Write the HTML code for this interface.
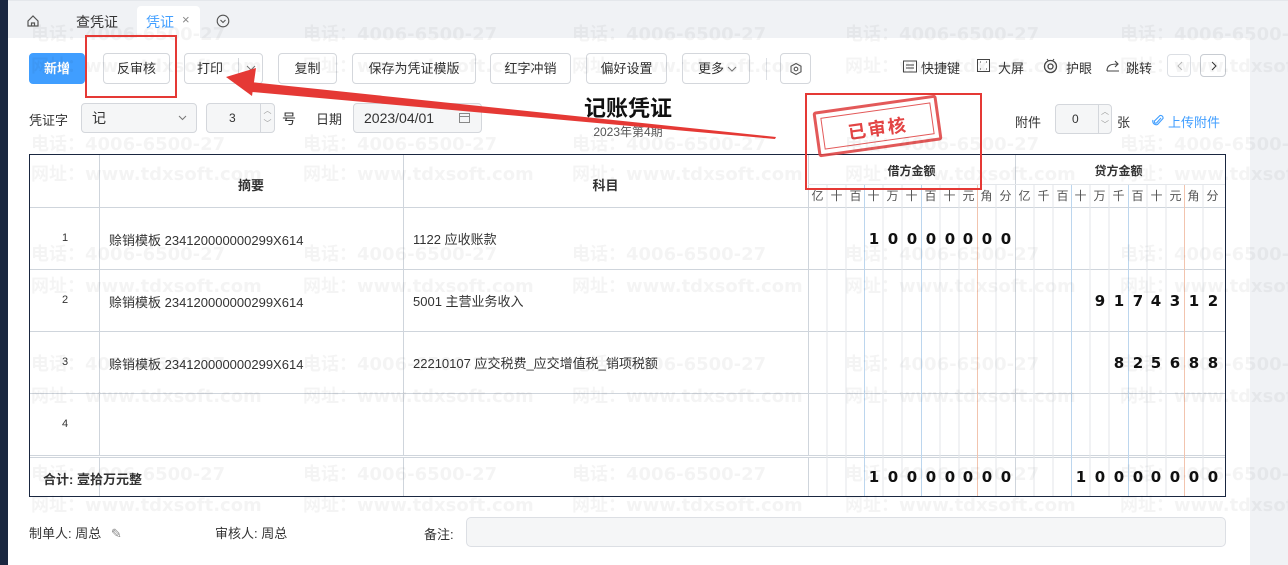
<!DOCTYPE html>
<html><head><meta charset="utf-8"><style>
*{box-sizing:border-box;margin:0;padding:0}
body{width:1288px;height:565px;overflow:hidden;background:#fff;font-family:"Liberation Sans","Noto Sans CJK SC",sans-serif;font-size:13px;color:#333;position:relative}
.a{position:absolute}
.btn{position:absolute;top:53px;height:31px;border:1px solid #d4d7dc;border-radius:4px;background:#fff;font-size:13px;line-height:29px;text-align:center;color:#333}
.inp{position:absolute;height:30px;border:1px solid #d4d7dc;border-radius:4px;background:#f5f6f7;line-height:28px;font-size:13px}
.wm{position:absolute;font-weight:bold;font-size:18px;color:rgba(0,0,0,0.045);white-space:nowrap;pointer-events:none;font-family:"DejaVu Sans","Noto Sans CJK SC",sans-serif}
.vl{position:absolute;width:1px}
.hl{position:absolute;height:1px;background:#cfd5dc}
.u{position:absolute;top:187px;width:19px;text-align:center;font-size:12px;color:#555}
</style></head><body>
<div class="a" style="left:0;top:0;width:8px;height:565px;background:#1a2740"></div>
<div class="a" style="left:8px;top:0;width:1280px;height:38px;background:#f0f2f5;border-top:1px solid #e4e7eb"></div>
<div class="a" style="left:1250px;top:38px;width:38px;height:527px;background:#f0f2f5"></div>
<svg class="a" style="left:26px;top:14px" width="14" height="14" viewBox="0 0 14 14"><path d="M2 7 L7 2 L12 7 V12 H2 Z M5.5 12 V9 H8.5 V12" fill="none" stroke="#555" stroke-width="1.2"/></svg>
<div class="a" style="left:76px;top:12px;font-size:14px;color:#333">查凭证</div>
<div class="a" style="left:137px;top:6px;width:63px;height:32px;background:#fff;border-radius:4px 4px 0 0"></div>
<div class="a" style="left:146px;top:12px;font-size:14px;color:#409eff">凭证</div>
<div class="a" style="left:182px;top:12px;font-size:13px;color:#888">×</div>
<svg class="a" style="left:216px;top:14px" width="14" height="14" viewBox="0 0 14 14"><circle cx="7" cy="7" r="5.8" fill="none" stroke="#555" stroke-width="1.1"/><path d="M4.5 6 L7 8.5 L9.5 6" fill="none" stroke="#555" stroke-width="1.1"/></svg>
<div class="btn" style="left:29px;width:56px;background:#409eff;border-color:#409eff;color:#fff;font-weight:bold">新增</div>
<div class="btn" style="left:103px;width:67px">反审核</div>
<div class="btn" style="left:184px;width:79px;text-align:left;padding-left:12px">打印<span style="position:absolute;left:53px;top:4px;height:21px;border-left:1px solid #d4d7dc"></span><svg style="position:absolute;left:61px;top:10px" width="10" height="8" viewBox="0 0 10 8"><path d="M1 2 L5 6 L9 2" fill="none" stroke="#777"/></svg></div>
<div class="btn" style="left:278px;width:59px">复制</div>
<div class="btn" style="left:352px;width:124px">保存为凭证模版</div>
<div class="btn" style="left:490px;width:81px">红字冲销</div>
<div class="btn" style="left:586px;width:81px">偏好设置</div>
<div class="btn" style="left:682px;width:68px;padding-right:10px">更多<svg style="position:absolute;left:44px;top:12px" width="10" height="7" viewBox="0 0 10 7"><path d="M1 1 L5 5 L9 1" fill="none" stroke="#777"/></svg></div>
<div class="a" style="left:766px;top:58px;width:1px;height:22px;background:#dcdfe4"></div>
<div class="btn" style="left:780px;width:31px"><svg width="14" height="14" viewBox="0 0 14 14" style="margin-top:8px"><path d="M7 1.5 L12 4.2 V9.8 L7 12.5 L2 9.8 V4.2 Z" fill="none" stroke="#555" stroke-width="1.1"/><circle cx="7" cy="7" r="1.8" fill="none" stroke="#555" stroke-width="1.1"/></svg></div>
<svg class="a" style="left:903px;top:60px" width="14" height="13" viewBox="0 0 14 13"><rect x="0.5" y="1" width="13" height="11" fill="none" stroke="#444"/><path d="M3 5h8M3 8h8" stroke="#444"/></svg>
<div class="a" style="left:921px;top:58px;font-size:13px">快捷键</div>
<svg class="a" style="left:977px;top:59px" width="13" height="13" viewBox="0 0 13 13"><rect x="0.5" y="0.5" width="12" height="12" fill="none" stroke="#444"/><path d="M3 3h1M9 3h1M3 10h1M9 10h1" stroke="#444"/></svg>
<div class="a" style="left:998px;top:58px;font-size:13px">大屏</div>
<svg class="a" style="left:1042px;top:57px" width="17" height="17" viewBox="0 0 17 17"><circle cx="8.5" cy="9.5" r="6" fill="none" stroke="#444" stroke-width="1.3"/><circle cx="8.5" cy="9.5" r="2.5" fill="none" stroke="#444" stroke-width="1.3"/><path d="M5 2l1.5 2M12 2l-1.5 2" stroke="#444"/></svg>
<div class="a" style="left:1066px;top:58px;font-size:13px">护眼</div>
<svg class="a" style="left:1106px;top:59px" width="15" height="13" viewBox="0 0 15 13"><path d="M1 12 C1 6 5 5 12 5 M9 2 L12 5 L9 8" fill="none" stroke="#444" stroke-width="1.1"/><path d="M1 12h12" stroke="#444"/></svg>
<div class="a" style="left:1126px;top:58px;font-size:13px">跳转</div>
<div class="a" style="left:1167px;top:54px;width:24px;height:23px;border:1px solid #dcdfe4;border-radius:4px"><svg style="position:absolute;left:8px;top:6px" width="7" height="10" viewBox="0 0 7 10"><path d="M6 1 L2 5 L6 9" fill="none" stroke="#bbb"/></svg></div>
<div class="a" style="left:1200px;top:54px;width:26px;height:23px;border:1px solid #c8ccd2;border-radius:4px"><svg style="position:absolute;left:10px;top:6px" width="7" height="10" viewBox="0 0 7 10"><path d="M1 1 L5 5 L1 9" fill="none" stroke="#333"/></svg></div>
<div class="a" style="left:29px;top:110px">凭证字</div>
<div class="inp" style="left:81px;top:103px;width:116px;padding-left:10px;font-size:14px">记<svg style="position:absolute;right:9px;top:11px" width="9" height="6" viewBox="0 0 9 6"><path d="M1 1 L4.5 4.5 L8 1" fill="none" stroke="#777"/></svg></div>
<div class="inp" style="left:206px;top:103px;width:69px;padding-left:22px;font-size:12px">3<span style="position:absolute;right:0;top:0;width:14px;height:28px;border-left:1px solid #d4d7dc;font-size:8px;line-height:13px;color:#999;text-align:center">︿<br>﹀</span></div>
<div class="a" style="left:282px;top:109px;font-size:14px">号</div>
<div class="a" style="left:316px;top:109px">日期</div>
<div class="inp" style="left:353px;top:103px;width:129px;padding-left:10px;font-size:14px">2023/04/01<svg style="position:absolute;right:11px;top:9px" width="11" height="10" viewBox="0 0 11 10"><rect x="0.5" y="0.5" width="10" height="9" fill="none" stroke="#888"/><path d="M0.5 3.5h10" stroke="#888"/></svg></div>
<div class="a" style="left:568px;top:91px;width:120px;text-align:center;font-size:22px;font-weight:bold;color:#111">记账凭证</div>
<div class="a" style="left:568px;top:123px;width:120px;text-align:center;font-size:12px;color:#555">2023年第4期</div>
<div class="a" style="left:1015px;top:112px">附件</div>
<div class="inp" style="left:1055px;top:104px;width:57px;padding-left:16px;font-size:12px">0<span style="position:absolute;right:0;top:0;width:13px;height:28px;border-left:1px solid #d4d7dc;font-size:8px;line-height:13px;color:#999;text-align:center">︿<br>﹀</span></div>
<div class="a" style="left:1117px;top:112px">张</div>
<svg class="a" style="left:1152px;top:113px" width="12" height="14" viewBox="0 0 12 14"><path d="M9 5 L4.5 10 A1.5 1.5 0 0 1 2.5 8 L8 2.5 A2.5 2.5 0 0 1 11 5.5 L5.5 11.5 A3.5 3.5 0 0 1 1 7" fill="none" stroke="#409eff" stroke-width="1.1"/></svg>
<div class="a" style="left:1168px;top:112px;color:#409eff">上传附件</div>
<div class="a" style="left:29px;top:154px;width:1197px;height:343px;border:1.5px solid #1a2740"></div>
<div class="vl" style="left:99px;top:155px;height:341px;background:#cfd5dc"></div>
<div class="vl" style="left:403px;top:155px;height:341px;background:#cfd5dc"></div>
<div class="vl" style="left:808px;top:155px;height:341px;background:#cfd5dc"></div>
<div class="vl" style="left:1015px;top:155px;height:341px;background:#cfd5dc"></div>
<div class="hl" style="left:808px;top:184px;width:417px;background:#e3e6ea"></div>
<div class="hl" style="left:30px;top:207px;width:1195px"></div>
<div class="hl" style="left:30px;top:269px;width:1195px"></div>
<div class="hl" style="left:30px;top:331px;width:1195px"></div>
<div class="hl" style="left:30px;top:393px;width:1195px"></div>
<div class="hl" style="left:30px;top:455px;width:1195px;height:3px;border-top:1px solid #cfd5dc;border-bottom:1px solid #cfd5dc;background:#fff"></div>
<div class="a" style="left:99px;top:175px;width:304px;text-align:center;font-weight:bold">摘要</div>
<div class="a" style="left:403px;top:175px;width:405px;text-align:center;font-weight:bold">科目</div>
<div class="a" style="left:808px;top:162px;width:207px;text-align:center;font-weight:bold;font-size:12px">借方金额</div>
<div class="a" style="left:1015px;top:162px;width:207px;text-align:center;font-weight:bold;font-size:12px">贷方金额</div>
<div class="a" style="left:30px;top:232px;width:70px;text-align:center;font-size:11px">1</div>
<div class="a" style="left:30px;top:294px;width:70px;text-align:center;font-size:11px">2</div>
<div class="a" style="left:30px;top:356px;width:70px;text-align:center;font-size:11px">3</div>
<div class="a" style="left:30px;top:418px;width:70px;text-align:center;font-size:11px">4</div>
<div class="a" style="left:109px;top:230px">赊销模板 234120000000299X614</div>
<div class="a" style="left:109px;top:292px">赊销模板 234120000000299X614</div>
<div class="a" style="left:109px;top:354px">赊销模板 234120000000299X614</div>
<div class="a" style="left:413px;top:229px">1122 应收账款</div>
<div class="a" style="left:413px;top:291px">5001 主营业务收入</div>
<div class="a" style="left:413px;top:353px">22210107 应交税费_应交增值税_销项税额</div>
<div class="a" style="left:43px;top:469px;font-weight:bold">合计: 壹拾万元整</div>
<div class="u" style="left:808px">亿</div><div class="u" style="left:827px">十</div><div class="u" style="left:846px">百</div><div class="u" style="left:864px">十</div><div class="u" style="left:883px">万</div><div class="u" style="left:902px">十</div><div class="u" style="left:921px">百</div><div class="u" style="left:940px">十</div><div class="u" style="left:959px">元</div><div class="u" style="left:977px">角</div><div class="u" style="left:996px">分</div>
<div class="u" style="left:1015px">亿</div><div class="u" style="left:1034px">千</div><div class="u" style="left:1053px">百</div><div class="u" style="left:1071px">十</div><div class="u" style="left:1090px">万</div><div class="u" style="left:1109px">千</div><div class="u" style="left:1128px">百</div><div class="u" style="left:1147px">十</div><div class="u" style="left:1166px">元</div><div class="u" style="left:1184px">角</div><div class="u" style="left:1203px">分</div>
<svg class="a" style="left:0;top:0" width="1288" height="565">
<g stroke-width="1">
<path d="M827 185V496M846 185V496M883 185V496M902 185V496M940 185V496M959 185V496M996 185V496" stroke="#e3e6ea"/>
<path d="M864.5 185V496M921.5 185V496" stroke="#bcd6ee"/>
<path d="M977.5 185V496" stroke="#f2c4ae"/>
<path d="M1034 185V496M1053 185V496M1090 185V496M1109 185V496M1147 185V496M1166 185V496M1203 185V496" stroke="#e3e6ea"/>
<path d="M1071.5 185V496M1128.5 185V496" stroke="#bcd6ee"/>
<path d="M1184.5 185V496" stroke="#f2c4ae"/>
</g>
<g font-family="DejaVu Sans,sans-serif" font-weight="bold" font-size="15" fill="#111" text-anchor="middle">
<text x="874" y="244">1</text><text x="893" y="244">0</text><text x="912" y="244">0</text><text x="931" y="244">0</text><text x="950" y="244">0</text><text x="968" y="244">0</text><text x="987" y="244">0</text><text x="1006" y="244">0</text>
<text x="1100" y="306">9</text><text x="1119" y="306">1</text><text x="1138" y="306">7</text><text x="1156" y="306">4</text><text x="1175" y="306">3</text><text x="1194" y="306">1</text><text x="1213" y="306">2</text>
<text x="1119" y="368">8</text><text x="1138" y="368">2</text><text x="1156" y="368">5</text><text x="1175" y="368">6</text><text x="1194" y="368">8</text><text x="1213" y="368">8</text>
<text x="874" y="482">1</text><text x="893" y="482">0</text><text x="912" y="482">0</text><text x="931" y="482">0</text><text x="950" y="482">0</text><text x="968" y="482">0</text><text x="987" y="482">0</text><text x="1006" y="482">0</text>
<text x="1081" y="482">1</text><text x="1100" y="482">0</text><text x="1119" y="482">0</text><text x="1138" y="482">0</text><text x="1156" y="482">0</text><text x="1175" y="482">0</text><text x="1194" y="482">0</text><text x="1213" y="482">0</text>
</g>
</svg>
<div class="a" style="left:29px;top:523px">制单人: 周总 <span style="color:#888;margin-left:6px">✎</span></div>
<div class="a" style="left:215px;top:523px">审核人: 周总</div>
<div class="a" style="left:424px;top:524px">备注:</div>
<div class="a" style="left:466px;top:517px;width:760px;height:30px;border:1px solid #dcdfe4;border-radius:5px;background:#f5f6f7"></div>
<div class="a" style="left:815px;top:103px;width:125px;height:46px;border:3px solid #e04848;transform:rotate(-8deg);border-radius:3px;opacity:.9"><div style="position:absolute;left:4px;top:4px;right:4px;bottom:4px;border:1.5px solid #e04848"></div><div style="position:absolute;left:0;right:0;top:9px;text-align:center;color:#e03030;font-weight:bold;font-size:18px;letter-spacing:2px">已审核</div></div>
<div class="wm" style="left:31px;top:20px">电话：4006-6500-27</div><div class="wm" style="left:303px;top:20px">电话：4006-6500-27</div><div class="wm" style="left:572px;top:20px">电话：4006-6500-27</div><div class="wm" style="left:845px;top:20px">电话：4006-6500-27</div><div class="wm" style="left:1120px;top:20px">电话：4006-6500-27</div>
<div class="wm" style="left:31px;top:52px">网址：www.tdxsoft.com</div><div class="wm" style="left:303px;top:52px">网址：www.tdxsoft.com</div><div class="wm" style="left:572px;top:52px">网址：www.tdxsoft.com</div><div class="wm" style="left:845px;top:52px">网址：www.tdxsoft.com</div><div class="wm" style="left:1120px;top:52px">网址：www.tdxsoft.com</div>
<div class="wm" style="left:31px;top:130px">电话：4006-6500-27</div><div class="wm" style="left:303px;top:130px">电话：4006-6500-27</div><div class="wm" style="left:572px;top:130px">电话：4006-6500-27</div><div class="wm" style="left:845px;top:130px">电话：4006-6500-27</div><div class="wm" style="left:1120px;top:130px">电话：4006-6500-27</div>
<div class="wm" style="left:31px;top:160px">网址：www.tdxsoft.com</div><div class="wm" style="left:303px;top:160px">网址：www.tdxsoft.com</div><div class="wm" style="left:572px;top:160px">网址：www.tdxsoft.com</div><div class="wm" style="left:845px;top:160px">网址：www.tdxsoft.com</div><div class="wm" style="left:1120px;top:160px">网址：www.tdxsoft.com</div>
<div class="wm" style="left:31px;top:240px">电话：4006-6500-27</div><div class="wm" style="left:303px;top:240px">电话：4006-6500-27</div><div class="wm" style="left:572px;top:240px">电话：4006-6500-27</div><div class="wm" style="left:845px;top:240px">电话：4006-6500-27</div><div class="wm" style="left:1120px;top:240px">电话：4006-6500-27</div>
<div class="wm" style="left:31px;top:272px">网址：www.tdxsoft.com</div><div class="wm" style="left:303px;top:272px">网址：www.tdxsoft.com</div><div class="wm" style="left:572px;top:272px">网址：www.tdxsoft.com</div><div class="wm" style="left:845px;top:272px">网址：www.tdxsoft.com</div><div class="wm" style="left:1120px;top:272px">网址：www.tdxsoft.com</div>
<div class="wm" style="left:31px;top:350px">电话：4006-6500-27</div><div class="wm" style="left:303px;top:350px">电话：4006-6500-27</div><div class="wm" style="left:572px;top:350px">电话：4006-6500-27</div><div class="wm" style="left:845px;top:350px">电话：4006-6500-27</div><div class="wm" style="left:1120px;top:350px">电话：4006-6500-27</div>
<div class="wm" style="left:31px;top:382px">网址：www.tdxsoft.com</div><div class="wm" style="left:303px;top:382px">网址：www.tdxsoft.com</div><div class="wm" style="left:572px;top:382px">网址：www.tdxsoft.com</div><div class="wm" style="left:845px;top:382px">网址：www.tdxsoft.com</div><div class="wm" style="left:1120px;top:382px">网址：www.tdxsoft.com</div>
<div class="wm" style="left:31px;top:460px">电话：4006-6500-27</div><div class="wm" style="left:303px;top:460px">电话：4006-6500-27</div><div class="wm" style="left:572px;top:460px">电话：4006-6500-27</div><div class="wm" style="left:845px;top:460px">电话：4006-6500-27</div><div class="wm" style="left:1120px;top:460px">电话：4006-6500-27</div>
<div class="wm" style="left:31px;top:491px">网址：www.tdxsoft.com</div><div class="wm" style="left:303px;top:491px">网址：www.tdxsoft.com</div><div class="wm" style="left:572px;top:491px">网址：www.tdxsoft.com</div><div class="wm" style="left:845px;top:491px">网址：www.tdxsoft.com</div><div class="wm" style="left:1120px;top:491px">网址：www.tdxsoft.com</div>
<div class="a" style="left:85px;top:35px;width:92px;height:63px;border:2.5px solid #e53935"></div>
<div class="a" style="left:805px;top:93px;width:177px;height:97px;border:2.5px solid #e53935"></div>
<svg class="a" style="left:0;top:0" width="1288" height="565"><polygon points="776,137 250,82 252,92 775,139" fill="#e53935"/><polygon points="226,77 256,68 252,96" fill="#e53935"/></svg>
</body></html>
